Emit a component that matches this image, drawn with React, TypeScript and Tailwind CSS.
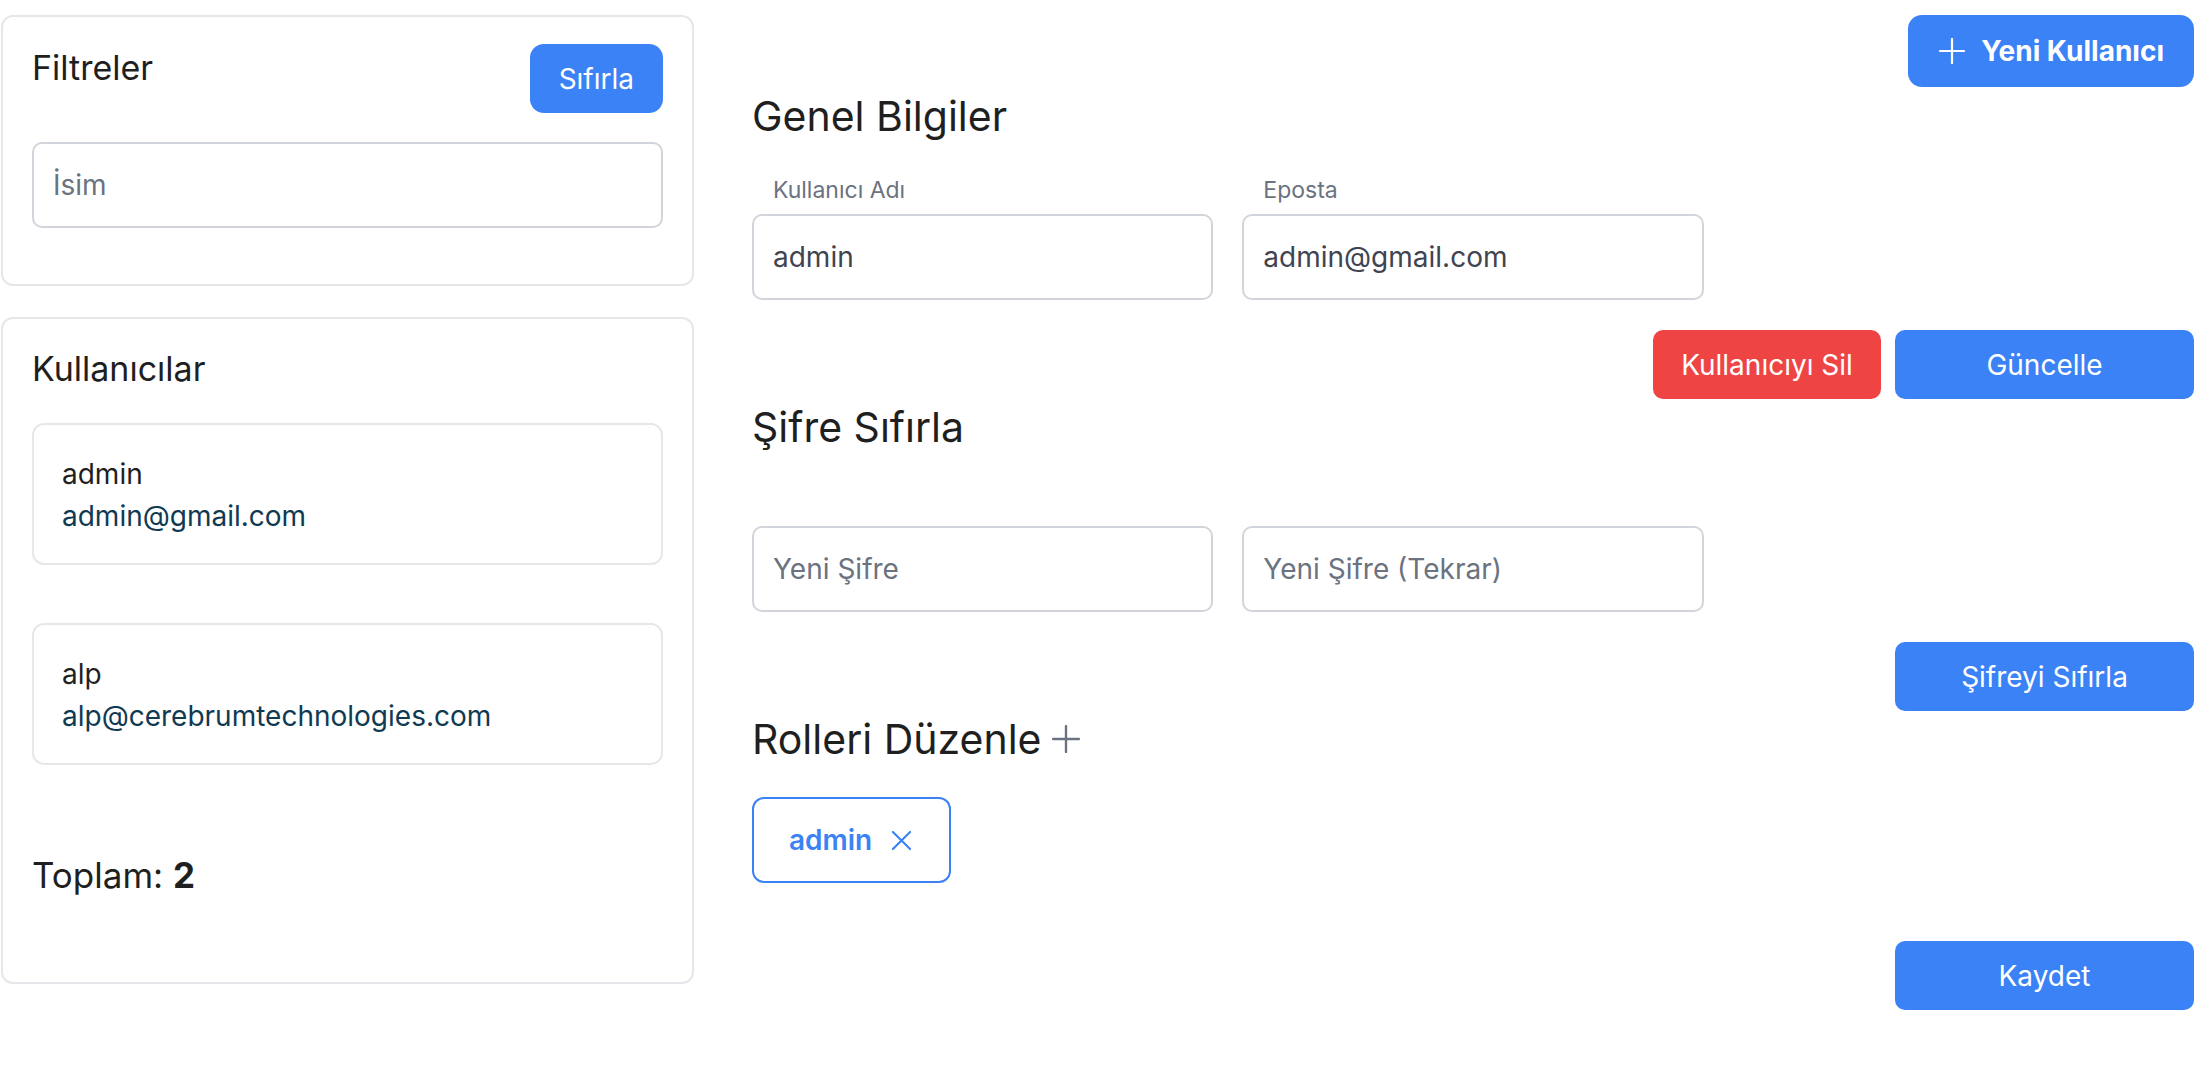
import React from 'react';

function PlusIcon({ size, className }: { size: number; className?: string }) {
  return (
    <svg width={size} height={size} viewBox="0 0 26 26" fill="none" className={className}>
      <path d="M13 1v24M1 13h24" stroke="currentColor" strokeWidth="2.2" strokeLinecap="round" />
    </svg>
  );
}

function CloseIcon({ size, className }: { size: number; className?: string }) {
  return (
    <svg width={size} height={size} viewBox="0 0 22 22" fill="none" className={className}>
      <path d="M2 2l18 18M20 2L2 20" stroke="currentColor" strokeWidth="2.2" strokeLinecap="round" />
    </svg>
  );
}

const users = [
  { name: 'admin', email: 'admin@gmail.com' },
  { name: 'alp', email: 'alp@cerebrumtechnologies.com' },
];

const inputCls =
  'w-full h-[86px] border-2 border-[#d1d5db] rounded-[10px] px-[19px] text-[28px] text-[#3f4450] placeholder:text-[#6b7280] bg-white outline-none';

const blueBtn =
  'h-[69px] rounded-[10px] bg-[#3b82f6] text-white text-[28px] flex items-center justify-center';

function Field({ label, value, placeholder }: { label?: string; value?: string; placeholder?: string }) {
  return (
    <div className="flex flex-col">
      {label && <label className="pl-[21px] mb-[10px] text-[23px] leading-[28px] text-[#6b7280]">{label}</label>}
      <input className={inputCls} defaultValue={value} placeholder={placeholder} />
    </div>
  );
}

export default function App() {
  return (
    <div className="flex min-h-screen bg-white font-['Inter',sans-serif] text-[#1f1f1f]">
      <aside className="w-[694px] shrink-0 pl-px pt-[15px] flex flex-col gap-[31px]">
        <section className="border-2 border-[#e5e7eb] rounded-[12px] px-[29px] pt-[27px] pb-[56px]">
          <div className="flex justify-between items-start">
            <h2 className="text-[34px] leading-[48px]">Filtreler</h2>
            <button className="h-[69px] px-[29px] rounded-[14px] bg-[#3b82f6] text-white text-[28px]">Sıfırla</button>
          </div>
          <input className={inputCls + ' mt-[29px]'} placeholder="İsim" />
        </section>

        <section className="border-2 border-[#e5e7eb] rounded-[12px] px-[29px] pt-[26px] pb-[83px]">
          <h2 className="text-[34px] leading-[48px]">Kullanıcılar</h2>
          <div className="mt-[30px] flex flex-col gap-[58px]">
            {users.map((u) => (
              <div key={u.email} className="border-2 border-[#e5e7eb] rounded-[12px] px-[28px] pt-[28px] pb-[26px] text-[28px] leading-[42px]">
                <div className="text-[#1f1f1f]">{u.name}</div>
                <div className="text-[#0f3a52]">{u.email}</div>
              </div>
            ))}
          </div>
          <p className="mt-[86px] text-[35px] leading-[48px]">
            Toplam: <span className="font-bold">2</span>
          </p>
        </section>
      </aside>

      <main className="flex-1 ml-[58px] pr-[17px] pt-[15px]">
        <div className="flex justify-end">
          <button className="h-[72px] pl-[31px] pr-[30px] rounded-[14px] bg-[#3b82f6] text-white text-[28px] font-bold flex items-center gap-[16px]">
            <PlusIcon size={26} />
            Yeni Kullanıcı
          </button>
        </div>

        <h1 className="mt-[4px] text-[41px] leading-[50px]">Genel Bilgiler</h1>
        <div className="mt-[35px] grid grid-cols-3 gap-x-[29px]">
          <Field label="Kullanıcı Adı" value="admin" />
          <Field label="Eposta" value="admin@gmail.com" />
        </div>
        <div className="mt-[30px] flex justify-end gap-[14px]">
          <button className="h-[69px] w-[228px] rounded-[10px] bg-[#ef4444] text-white text-[28px]">Kullanıcıyı Sil</button>
          <button className={blueBtn + ' w-[299px]'}>Güncelle</button>
        </div>

        <h1 className="mt-[3px] text-[41px] leading-[50px]">Şifre Sıfırla</h1>
        <div className="mt-[74px] grid grid-cols-3 gap-x-[29px]">
          <Field placeholder="Yeni Şifre" />
          <Field placeholder="Yeni Şifre (Tekrar)" />
        </div>
        <div className="mt-[30px] flex justify-end">
          <button className={blueBtn + ' w-[299px]'}>Şifreyi Sıfırla</button>
        </div>

        <h1 className="mt-[3px] text-[41px] leading-[50px] flex items-center gap-[10px]">
          Rolleri Düzenle
          <PlusIcon size={28} className="text-[#6b7280]" />
        </h1>
        <div className="mt-[33px] flex">
          <span className="h-[86px] inline-flex items-center gap-[19px] border-2 border-[#3b82f6] rounded-[12px] pl-[35px] pr-[37px] text-[#3b82f6] text-[28px] font-semibold">
            admin
            <CloseIcon size={21} />
          </span>
        </div>

        <div className="mt-[58px] flex justify-end">
          <button className={blueBtn + ' w-[299px]'}>Kaydet</button>
        </div>
      </main>
    </div>
  );
}
